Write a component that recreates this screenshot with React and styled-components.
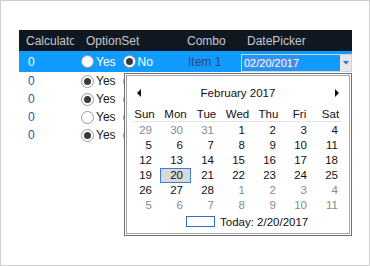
import React from "react";
import styled, { createGlobalStyle } from "styled-components";

const GlobalStyle = createGlobalStyle`
  html, body {
    margin: 0;
    padding: 0;
    background: #ffffff;
  }
  * {
    box-sizing: border-box;
  }
`;

const rows = [
  { value: "0", yes: false, no: true, combo: "Item 1", date: "02/20/2017", selected: true },
  { value: "0", yes: true },
  { value: "0", yes: true },
  { value: "0", yes: false },
  { value: "0", yes: true },
];

const weeks = [
  [[29, 1], [30, 1], [31, 1], [1], [2], [3], [4]],
  [[5], [6], [7], [8], [9], [10], [11]],
  [[12], [13], [14], [15], [16], [17], [18]],
  [[19], [20, 0, 1], [21], [22], [23], [24], [25]],
  [[26], [27], [28], [1, 1], [2, 1], [3, 1], [4, 1]],
  [[5, 1], [6, 1], [7, 1], [8, 1], [9, 1], [10, 1], [11, 1]],
];

const dayNames = ["Sun", "Mon", "Tue", "Wed", "Thu", "Fri", "Sat"];

const Radio = ({ checked }) => (
  <RadioCircle>{checked && <RadioDot />}</RadioCircle>
);

const App = () => {
  return (
    <>
      <GlobalStyle />
      <Frame>
        <Grid>
          <HeaderCell>
            <HeaderText>Calculator</HeaderText>
          </HeaderCell>
          <HeaderCell>OptionSet</HeaderCell>
          <HeaderCell>Combo</HeaderCell>
          <HeaderCell>DatePicker</HeaderCell>

          {rows.map((r, i) => (
            <React.Fragment key={i}>
              <ValueCell selected={r.selected}>{r.value}</ValueCell>
              <OptionCell selected={r.selected}>
                <Radio checked={r.yes} />
                <OptionLabel>Yes</OptionLabel>
                <Radio checked={!r.yes && r.no} />
                {/* the popup hides the "No" label on the other rows */}
                {r.selected && <OptionLabel>No</OptionLabel>}
              </OptionCell>
              <ComboCell selected={r.selected}>{r.combo}</ComboCell>
              <DateCell selected={r.selected}>
                {r.date && (
                  <Editor>
                    <Selection>{r.date}</Selection>
                    <DropButton>
                      <svg width="6" height="4" viewBox="0 0 6 4">
                        <path d="M0 0 L6 0 L3 3.5 Z" fill="#1f78d1" />
                      </svg>
                    </DropButton>
                  </Editor>
                )}
              </DateCell>
            </React.Fragment>
          ))}
        </Grid>

        <Popup>
          <PopupInner>
            <TitleRow>
              <svg width="5" height="8" viewBox="0 0 5 8">
                <path d="M4 0 L0 4 L4 8 Z" fill="#111" />
              </svg>
              <span>February 2017</span>
              <svg width="5" height="8" viewBox="0 0 5 8">
                <path d="M1 0 L5 4 L1 8 Z" fill="#111" />
              </svg>
            </TitleRow>
            <DayHeader>
              {dayNames.map((d) => (
                <DayName key={d}>{d}</DayName>
              ))}
            </DayHeader>
            <Days>
              {weeks.flat().map(([n, other, sel], i) => (
                <Day key={i} other={other} sel={sel}>
                  {n}
                </Day>
              ))}
            </Days>
            <TodayRow>
              <TodayBox />
              <span>Today: 2/20/2017</span>
            </TodayRow>
          </PopupInner>
        </Popup>
      </Frame>
    </>
  );
};

const Frame = styled.div`
  position: relative;
  width: 370px;
  height: 266px;
  border: 1px solid #cfcfcf;
  padding: 29px 0 0 18px;
  font-family: "Liberation Sans", Arial, sans-serif;
  font-size: 12px;
`;

const Grid = styled.div`
  display: grid;
  grid-template-columns: 61px 101px 60px 111px;
  grid-template-rows: 21px 21px repeat(4, 18px);
  width: 333px;
`;

const HeaderCell = styled.div`
  background: #0f1821;
  color: #c4c9cf;
  display: flex;
  align-items: center;
  padding: 0 6px;
  white-space: nowrap;
  overflow: hidden;
  &:first-child {
    padding-left: 7px;
  }
`;

const HeaderText = styled.span`
  display: block;
  overflow: hidden;
  width: 50px;
`;

const Cell = styled.div`
  display: flex;
  align-items: center;
  white-space: nowrap;
  overflow: hidden;
  background: ${(p) => (p.selected ? "#129bff" : "#ffffff")};
`;

const ValueCell = styled(Cell)`
  padding-left: 9px;
  color: ${(p) => (p.selected ? "#ffffff" : "#2559a8")};
`;

const OptionCell = styled(Cell)`
  padding-left: 1px;
  color: ${(p) => (p.selected ? "#ffffff" : "#1a1a1a")};
`;

const OptionLabel = styled.span`
  margin: 0 7px 0 2px;
`;

const RadioCircle = styled.span`
  width: 13px;
  height: 13px;
  border-radius: 50%;
  border: 1px solid #9a9a9a;
  background: #ffffff;
  display: inline-flex;
  align-items: center;
  justify-content: center;
  flex-shrink: 0;
`;

const RadioDot = styled.span`
  width: 7px;
  height: 7px;
  border-radius: 50%;
  background: #333b44;
`;

const ComboCell = styled(Cell)`
  padding-left: 7px;
  color: #2b4a78;
`;

const DateCell = styled(Cell)`
  align-items: flex-end;
`;

const Editor = styled.div`
  width: 111px;
  height: 18px;
  border: 1px solid #cdd3da;
  display: flex;
  align-items: center;
  padding-left: 2px;
`;

const Selection = styled.span`
  background: #3b8fec;
  color: #ffffff;
  line-height: 12px;
  font-size: 11px;
`;

const DropButton = styled.div`
  margin-left: auto;
  width: 11px;
  height: 16px;
  background: #e6e6e6;
  display: flex;
  align-items: center;
  justify-content: center;
`;

const Popup = styled.div`
  position: absolute;
  left: 123px;
  top: 72px;
  width: 228px;
  height: 163px;
  border: 1px solid #6f6f6f;
  padding: 1px;
  background: #ffffff;
`;

const PopupInner = styled.div`
  height: 100%;
  border: 1px solid #a3a3a3;
  padding: 0 2px;
  color: #111111;
  font-size: 11.5px;
`;

const TitleRow = styled.div`
  height: 31px;
  padding: 3px 8px 0 8px;
  display: flex;
  align-items: center;
  justify-content: space-between;
`;

const DayHeader = styled.div`
  display: grid;
  grid-template-columns: repeat(7, 31px);
  height: 15px;
  border-bottom: 1px solid transparent;
  background: linear-gradient(#e4e4e4, #e4e4e4) no-repeat 4px 100% / 209px 1px;
  box-sizing: content-box;
`;

const DayName = styled.div`
  text-align: center;
  line-height: 15px;
`;

const Days = styled.div`
  display: grid;
  grid-template-columns: repeat(7, 31px);
  grid-auto-rows: 15px;
`;

const Day = styled.div`
  text-align: right;
  line-height: ${(p) => (p.sel ? "13px" : "15px")};
  color: ${(p) => (p.other ? "#8a8a8a" : "#111111")};
  background: ${(p) => (p.sel ? "#d9d9d9" : "transparent")};
  border: ${(p) => (p.sel ? "1px solid #3c7fd0" : "none")};
  padding-right: ${(p) => (p.sel ? "7px" : "8px")};
`;

const TodayRow = styled.div`
  height: 17px;
  display: flex;
  align-items: center;
  padding-left: 57px;
  gap: 5px;
`;

const TodayBox = styled.span`
  width: 29px;
  height: 11px;
  border: 1px solid #2f6fc4;
`;

export default App;
